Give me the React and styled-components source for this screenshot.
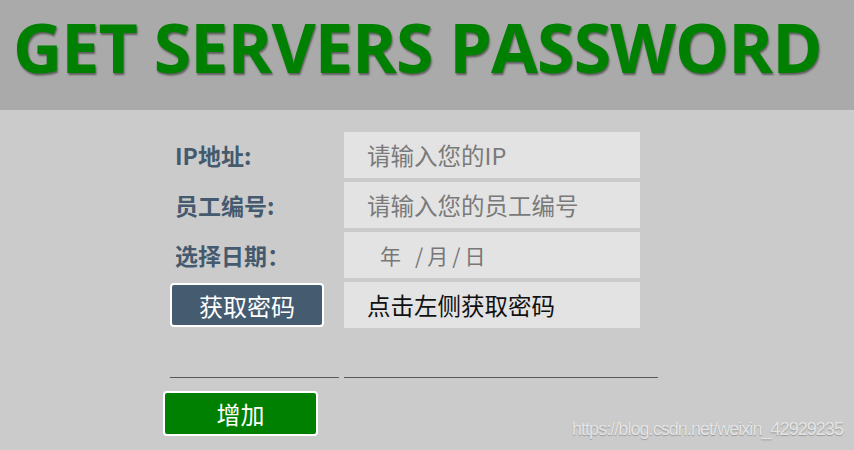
import React from 'react';
import styled, {createGlobalStyle} from 'styled-components';

const GlobalStyle = createGlobalStyle`
    html, body {
        margin: 0;
        padding: 0;
        background: #cbcbcb;
    }
    body {
        font-family: "Noto Sans CJK SC", "Open Sans", sans-serif;
    }
`;

const Page = styled.div`
    position: relative;
    width: 854px;
    height: 450px;
    overflow: hidden;
    background: #cbcbcb;
`;

const Header = styled.header`
    height: 110px;
    background: #aaaaaa;
    display: flex;
    align-items: center;
    padding-left: 13px;
    box-sizing: border-box;
`;

const Title = styled.h1`
    margin: 0;
    margin-top: -18px;
    font-family: "Open Sans", "Liberation Sans", sans-serif;
    font-weight: 700;
    font-size: 68px;
    font-stretch: 100%;
    letter-spacing: -0.9px;
    color: #008000;
    text-shadow: 1px 2px 2px rgba(0, 0, 0, 0.45);
    white-space: nowrap;
`;

const Form = styled.div`
    display: grid;
    grid-template-columns: 170px 296px;
    grid-auto-rows: 46px;
    column-gap: 4px;
    row-gap: 4px;
    margin: 22px 0 0 170px;
`;

const Label = styled.div`
    display: flex;
    align-items: center;
    padding-left: 5px;
    font-size: 23px;
    font-weight: 700;
    color: #455a6e;
`;

const Field = styled.div`
    display: flex;
    align-items: center;
    padding-left: 23px;
    background: #e3e3e3;
    font-size: 23.5px;
    color: ${(props) => (props.filled ? '#111111' : '#7a7a7a')};
`;

const DatePart = styled.span`
    margin-left: ${(props) => props.gap || 0}px;
    font-size: 21px;
    color: #777777;
`;

const ActionButton = styled.button`
    box-sizing: border-box;
    width: ${(props) => props.width}px;
    height: ${(props) => props.height}px;
    margin: 0;
    padding: 0;
    border: 2px solid #ffffff;
    border-radius: 4px;
    background: ${(props) => props.bg};
    color: #ffffff;
    font-family: "Noto Sans CJK SC", sans-serif;
    font-size: 24px;
    font-weight: 400;
    cursor: pointer;
`;

const LineRow = styled.div`
    display: grid;
    grid-template-columns: 169px 314px;
    column-gap: 5px;
    margin: 48px 0 0 170px;
`;

const Line = styled.div`
    height: 1px;
    border-bottom: 1px solid #585858;
`;

const AddWrap = styled.div`
    margin: 13px 0 0 163px;
`;

const Watermark = styled.div`
    position: absolute;
    right: 11px;
    bottom: 10px;
    font-family: "Liberation Sans", Arial, sans-serif;
    font-size: 18px;
    letter-spacing: -0.95px;
    color: #e4e4e4;
    text-shadow: 0 1px 1px rgba(0, 0, 0, 0.25);
`;

const App = () => {
    return (
        <Page>
            <GlobalStyle/>
            <Header>
                <Title>GET SERVERS PASSWORD</Title>
            </Header>

            <Form>
                <Label>IP地址:</Label>
                <Field>请输入您的IP</Field>

                <Label>员工编号:</Label>
                <Field>请输入您的员工编号</Field>

                <Label>选择日期：</Label>
                <Field>
                    <DatePart gap={13}>年</DatePart>
                    <DatePart gap={14}>/</DatePart>
                    <DatePart gap={4}>月</DatePart>
                    <DatePart gap={4}>/</DatePart>
                    <DatePart gap={4}>日</DatePart>
                </Field>

                <div style={{display: 'flex', alignItems: 'center'}}>
                    <ActionButton width={154} height={44} bg="#445b70">获取密码</ActionButton>
                </div>
                <Field filled>点击左侧获取密码</Field>
            </Form>

            <LineRow>
                <Line/>
                <Line/>
            </LineRow>

            <AddWrap>
                <ActionButton width={155} height={45} bg="#008000">增加</ActionButton>
            </AddWrap>

            <Watermark>https://blog.csdn.net/weixin_42929235</Watermark>
        </Page>
    );
};

export default App;
